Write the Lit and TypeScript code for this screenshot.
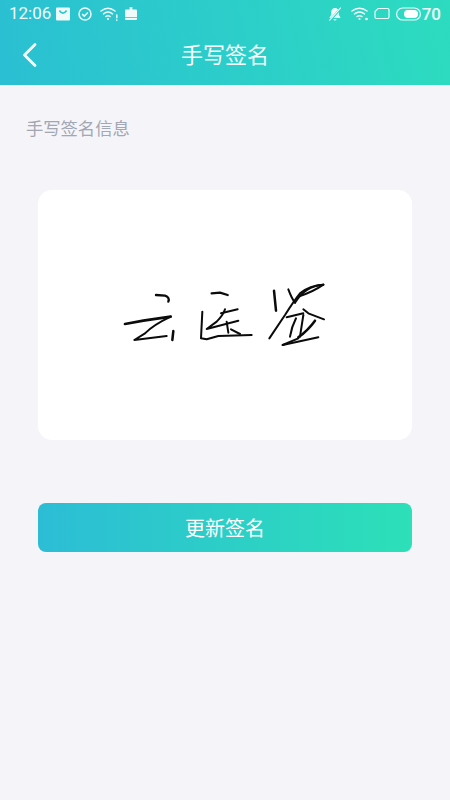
import { LitElement, html, css } from "lit";
import { customElement } from "lit/decorators.js";

@customElement("app-root")
export class AppRoot extends LitElement {
  static styles = css`
    :host {
      display: block;
      width: 450px;
      height: 800px;
      background: #f4f4f9;
      font-family: "Noto Sans CJK SC", "Noto Sans", sans-serif;
      overflow: hidden;
    }
    .top {
      height: 85px;
      background: linear-gradient(78deg, #2abfd3 0%, #2ccdca 50%, #2cdcbf 100%);
      color: #f6fefd;
      display: flex;
      flex-direction: column;
    }
    .status {
      height: 27px;
      display: flex;
      align-items: center;
      padding: 0 9px;
      font-family: Roboto, sans-serif;
      font-size: 17px;
      color: #eefbfa;
    }
    .time { width: 47px; line-height: 27px; }
    .status svg { display: block; flex: none; }
    .left { display: flex; align-items: center; }
    .check { margin-left: 8px; }
    .wifi-a { margin-left: 8px; }
    .tv { margin-left: 7px; }
    .spacer { flex: 1; }
    .right { display: flex; align-items: center; }
    .wifi-b { margin-left: 9px; }
    .sim { margin-left: 5px; }
    .batt { margin-left: 6px; }
    .pct { font-weight: 500; margin-left: 1px; }
    .nav {
      flex: 1;
      position: relative;
      display: flex;
      align-items: center;
      justify-content: center;
      font-size: 22px;
      padding-bottom: 6px;
    }
    .back { position: absolute; left: 20px; top: 15px; display: block; }
    .label {
      margin: 30px 0 0 26px;
      font-size: 17.3px;
      line-height: 25px;
      color: #a2a7b2;
    }
    .card {
      margin: 50px 38px 0 38px;
      height: 250px;
      background: #fff;
      border-radius: 14px;
      display: flex;
      align-items: center;
      justify-content: center;
    }
    .card svg { display: block; }
    .btn {
      margin: 63px 38px 0 38px;
      height: 49px;
      padding-bottom: 1px;
      box-sizing: border-box;
      border-radius: 8px;
      background: linear-gradient(90deg, #2cbdd6 0%, #2ce0b8 100%);
      color: #fff;
      font-size: 20px;
      display: flex;
      align-items: center;
      justify-content: center;
    }
  `;

  render() {
    return html`
      <div class="top">
        <div class="status">
          <div class="time">12:06</div>
          <div class="left">
            <svg width="14" height="14" viewBox="0 0 14 14">
              <path fill="#eefbfa" d="M1 .5h12a1 1 0 0 1 1 1v11a1 1 0 0 1-1 1H1a1 1 0 0 1-1-1v-11a1 1 0 0 1 1-1z" />
              <path fill="none" stroke="#2cc8ce" stroke-width="1.7" d="M3.400 3.500 Q7 8.800 10.600 3.500" />
            </svg>
            <svg class="check" width="14" height="14" viewBox="0 0 14 14" fill="none" stroke="#eefbfa" stroke-width="1.500">
              <circle cx="7" cy="7" r="6" />
              <path d="M4.200 7.100l2.100 2 3.500-3.600" />
            </svg>
            <svg class="wifi-a" width="18" height="14" viewBox="0 0 18 14" fill="none" stroke="#eefbfa" stroke-width="1.500" stroke-linecap="round">
              <path d="M1 4C5.500 .4 10.500 .4 15 4" />
              <path d="M3.500 6.900c3-2.400 6-2.400 9 0" />
              <path d="M5.900 9.500c1.500-1.100 2.700-1.100 4.200 0" />
              <circle cx="8" cy="12" r="1.100" fill="#eefbfa" stroke="none" />
              <path d="M16.800 8v2.800M16.800 13v.3" />
            </svg>
            <svg class="tv" width="12" height="13" viewBox="0 0 12 13">
              <path fill="#eefbfa" d="M4.600 0h2.800v2.500H11a1 1 0 0 1 1 1V12a1 1 0 0 1-1 1H1a1 1 0 0 1-1-1V3.500a1 1 0 0 1 1-1h3.600z" />
              <path fill="#2cc8ce" d="M0 10h12v.8H0z" />
            </svg>
          </div>
          <div class="spacer"></div>
          <div class="right">
            <svg width="14" height="14" viewBox="0 0 14 14">
              <path fill="#eefbfa" d="M7 1c2.400 0 3.800 1.700 3.800 4v2.800L12.600 11H1.400l1.800-3.200V5C3.200 2.700 4.600 1 7 1zM5.500 12h3a1.500 1.500 0 0 1-3 0z" />
              <path stroke="#2cd3c6" stroke-width="2.400" d="M1 14.500L13.500 .5" />
              <path stroke="#eefbfa" stroke-width="1.100" d="M1.300 13.600L12.800 .6" />
            </svg>
            <svg class="wifi-b" width="18" height="14" viewBox="0 0 18 14" fill="none" stroke="#eefbfa" stroke-width="1.500" stroke-linecap="round">
              <path d="M1 4C5.500 .3 11.500 .3 16 4" />
              <path d="M3.500 6.900c3-2.400 7-2.400 10 0" />
              <path d="M6 9.500c1.600-1.100 3.400-1.100 5 0" />
              <circle cx="8.500" cy="12" r="1.100" fill="#eefbfa" stroke="none" />
              <circle cx="15.500" cy="12" r="1.300" fill="#eefbfa" stroke="none" />
            </svg>
            <svg class="sim" width="16" height="13" viewBox="0 0 16 13" fill="none" stroke="#eefbfa" stroke-width="1.200">
              <path d="M4 1.500h9.500a1.500 1.500 0 0 1 1.500 1.500v7a1.500 1.500 0 0 1-1.500 1.500h-11A1.500 1.500 0 0 1 1 10V4.500z" />
            </svg>
            <svg class="batt" width="25" height="14" viewBox="0 0 25 14">
              <rect x=".6" y="1" width="23.800" height="12" rx="6" fill="none" stroke="#eefbfa" stroke-width="1.200" />
              <rect x="8" y="3" width="14" height="8" rx="4" fill="#fff" />
            </svg>
            <div class="pct">70</div>
          </div>
        </div>
        <div class="nav">
          <svg class="back" width="18" height="26" viewBox="0 0 18 26" fill="none" stroke="#f6fefd" stroke-width="2.800" stroke-linecap="round" stroke-linejoin="round">
            <path d="M15 2.500L4.500 13 15 23.500" />
          </svg>
          手写签名
        </div>
      </div>
      <div class="label">手写签名信息</div>
      <div class="card">
        <svg width="230" height="90" viewBox="0 0 690 270" fill="none" stroke="#0b0b0b" stroke-width="6" stroke-linecap="round" stroke-linejoin="round">
          <path d="M138 75 L165 77 Q180 82 175 95" stroke-width="7" />
          <path d="M45 162 L100 152 L182 140" stroke-width="8" />
          <path d="M182 140 Q130 165 105 190 L73 210 L170 198" />
          <path d="M190 183 L187 210" stroke-width="7.500" />

          <path d="M305 70 L330 68 L353 75" stroke-width="7" />
          <path d="M277 125 L273 205 L290 208 L325 198 L425 195" />
          <path d="M333 130 L383 118" />
          <path d="M345 118 Q340 135 320 155 L290 177 L385 152" />
          <path d="M350 155 L355 188" />
          <path d="M363 178 L390 192" />

          <path d="M492 62 L498 122" stroke-width="7.500" />
          <path d="M535 58 Q545 85 555 98" />
          <path d="M640 44 Q600 45 570 70 Q550 95 525 135 L478 205" />
          <path d="M555 98 Q585 48 640 44" />
          <path d="M570 78 Q610 65 640 44" />
          <path d="M530 142 L580 130" />
          <path d="M580 118 L595 130 L642 148" />
          <path d="M558 145 Q545 170 540 200" />
          <path d="M580 135 L570 200" />
          <path d="M615 152 Q595 180 565 202" stroke-width="7.500" />
          <path d="M518 225 L625 202" />
          <path d="M518 225 L565 205" />
        </svg>
      </div>
      <div class="btn">更新签名</div>
    `;
  }
}
